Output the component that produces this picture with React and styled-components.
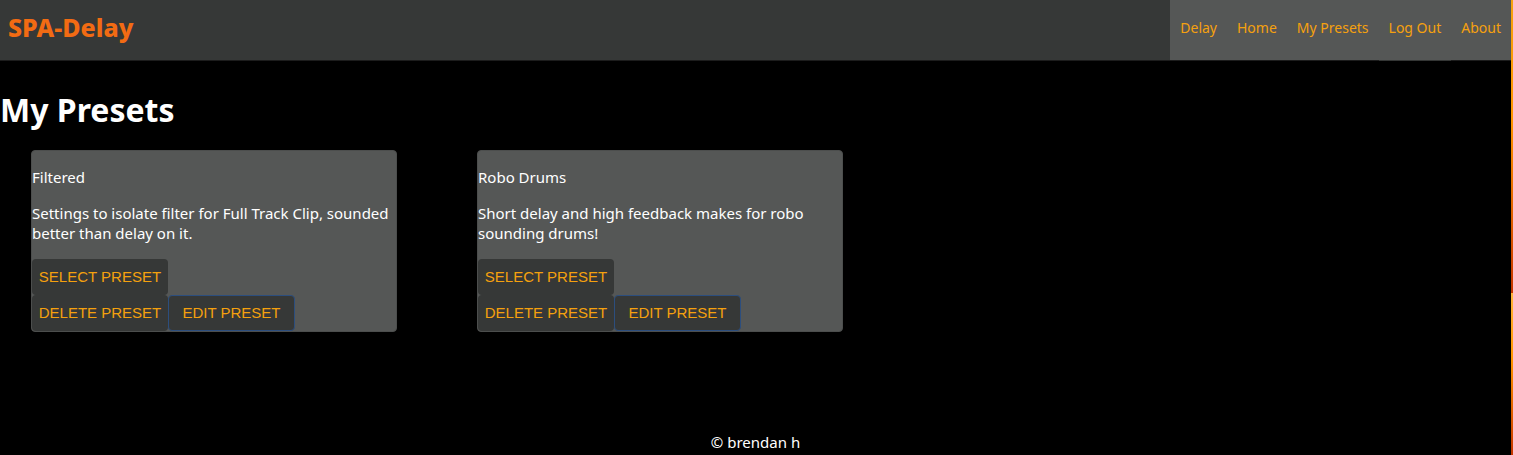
import React from "react";
import styled, { createGlobalStyle } from "styled-components";

const GlobalStyle = createGlobalStyle`
  * { box-sizing: border-box; }
  body {
    margin: 0;
    background: #000;
    color: #fff;
    font: 15px/20px Tahoma, "Noto Sans", sans-serif;
  }
`;

const Shell = styled.div`
  display: flex;
  min-height: 100vh;
`;

const Page = styled.div`
  display: flex;
  flex: 1;
  flex-direction: column;
  min-width: 0;
`;

const Edge = styled.div`
  display: flex;
  flex-direction: column;
  width: 2px;
`;

const EdgeBand = styled.div`
  flex: ${({ $grow }) => $grow};
  background: linear-gradient(${({ $from }) => $from}, #ff9500 40%, #c43500);
`;

const Header = styled.header`
  display: flex;
  justify-content: space-between;
  height: 61px;
  background: #363837;
  border-bottom: 1px solid #1c1c1c;
`;

const Brand = styled.a`
  padding: 11px 8px;
  color: #f26b13;
  font-size: 25px;
  font-weight: 800;
  line-height: 32px;
  text-decoration: none;
`;

const Nav = styled.nav`
  display: flex;
  background: #555756;
`;

const NavLink = styled.a`
  margin-bottom: -1px;
  padding: 18px 10px;
  border-bottom: 1px solid ${({ $underlined }) => ($underlined ? "#343635" : "transparent")};
  color: #f5a10e;
  font-size: 14px;
  text-decoration: none;
`;

const Title = styled.h1`
  margin: 29px 0 20px;
  font-size: 32px;
  line-height: 40px;
`;

const Presets = styled.main`
  display: flex;
  flex-wrap: wrap;
  align-items: flex-start;
  gap: 80px;
  padding: 0 31px;
`;

const Card = styled.article`
  flex: 0 1 366px;
  padding-top: 16px;
  background: #555756;
  border: 1px solid #4c4e4d;
  border-radius: 4px;
`;

const CardText = styled.p`
  margin: 0 0 16px;
`;

const Actions = styled.div`
  display: flex;
`;

const Button = styled.button`
  width: ${({ $outlined }) => ($outlined ? "127px" : "136px")};
  padding: ${({ $outlined }) => ($outlined ? "5px 4px" : "6px 4px")};
  background: #363837;
  border: ${({ $outlined }) => ($outlined ? "1px solid #2c4e7e" : "0")};
  border-radius: 4px;
  color: #f5a10e;
  font: 500 15px/24px "Liberation Sans", Arial, sans-serif;
  text-transform: uppercase;
  white-space: nowrap;
`;

const Footer = styled.footer`
  margin-top: auto;
  padding: 32px 0 3px;
  text-align: center;
`;

const links = ["Delay", "Home", "My Presets", "Log Out", "About"];

const presets = [
  {
    name: "Filtered",
    description:
      "Settings to isolate filter for Full Track Clip, sounded better than delay on it.",
  },
  {
    name: "Robo Drums",
    description: "Short delay and high feedback makes for robo sounding drums!",
  },
];

function PresetCard({ name, description }) {
  return (
    <Card>
      <CardText>{name}</CardText>
      <CardText>{description}</CardText>
      <Actions>
        <Button type="button">Select Preset</Button>
      </Actions>
      <Actions>
        <Button type="button">Delete Preset</Button>
        <Button type="button" $outlined>Edit Preset</Button>
      </Actions>
    </Card>
  );
}

export default function App() {
  return (
    <Shell>
      <GlobalStyle />
      <Page>
        <Header>
          <Brand href="#">SPA-Delay</Brand>
          <Nav>
            {links.map((label) => (
              <NavLink key={label} href="#" $underlined={label === "Log Out"}>
                {label}
              </NavLink>
            ))}
          </Nav>
        </Header>
        <Title>My Presets</Title>
        <Presets>
          {presets.map((preset) => (
            <PresetCard key={preset.name} {...preset} />
          ))}
        </Presets>
        <Footer>© brendan h</Footer>
      </Page>
      <Edge>
        <EdgeBand $grow={293} $from="#f5a10e" />
        <EdgeBand $grow={162} $from="#ffb53c" />
      </Edge>
    </Shell>
  );
}
